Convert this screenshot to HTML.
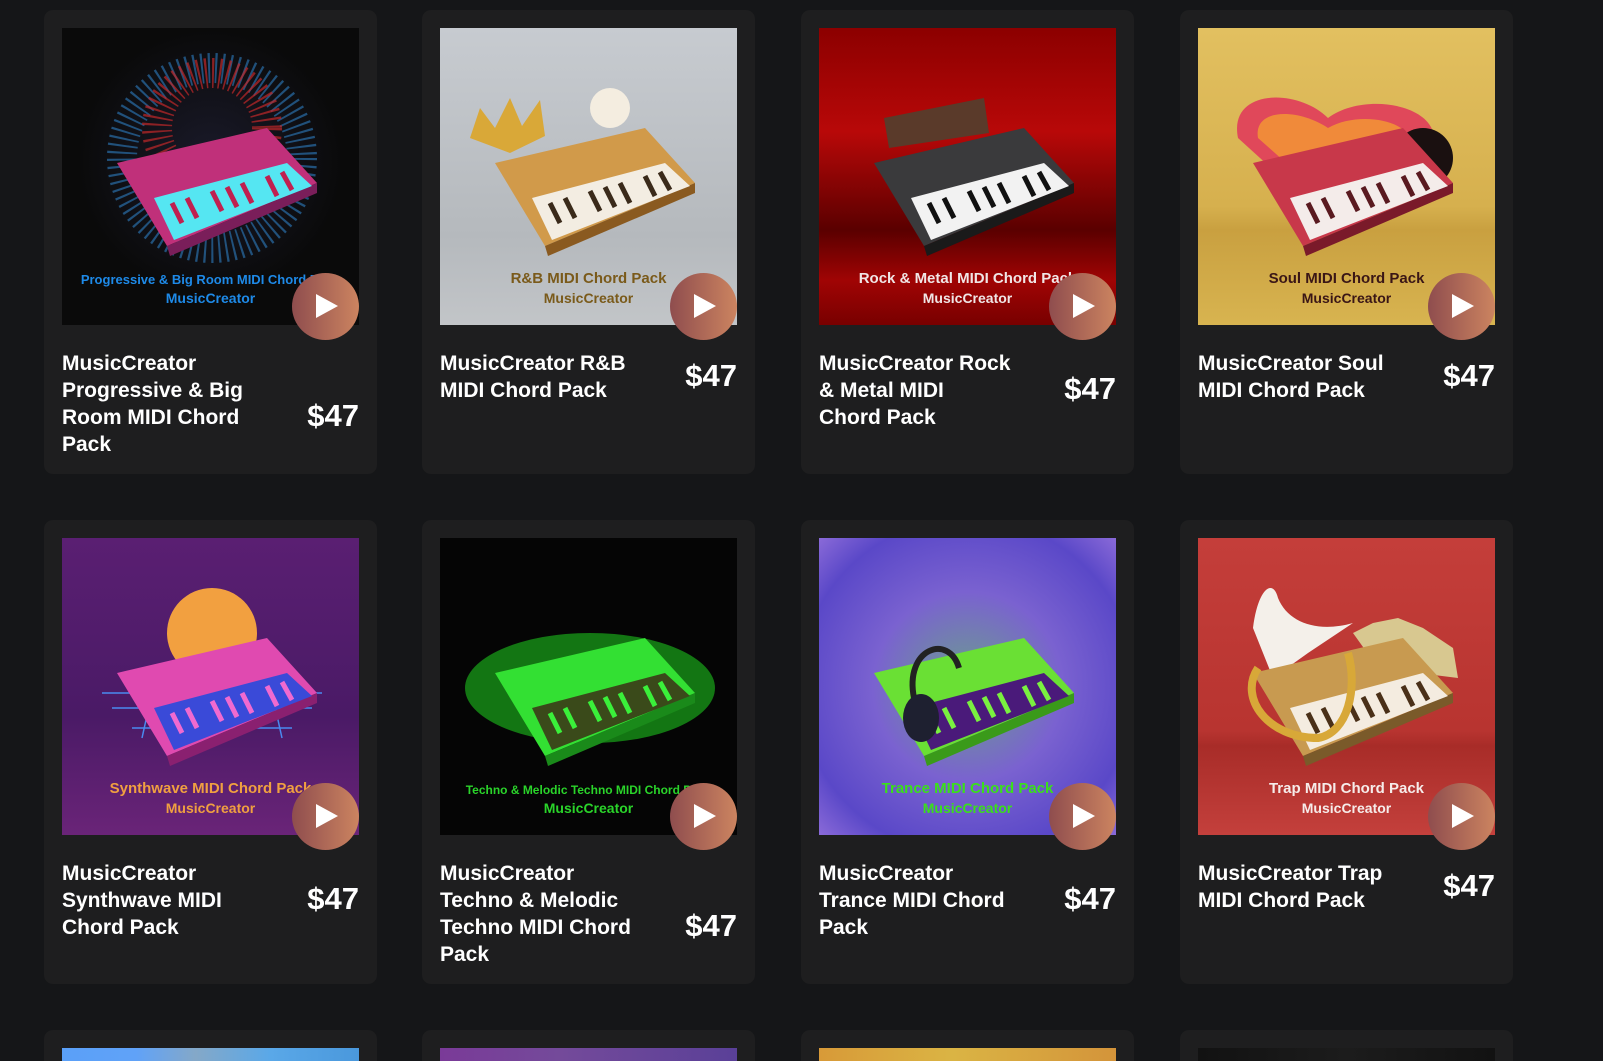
<!DOCTYPE html>
<html><head><meta charset="utf-8">
<style>
*{margin:0;padding:0;box-sizing:border-box}
html,body{width:1603px;height:1061px;overflow:hidden;background:#151618;font-family:"Liberation Sans",sans-serif}
.card{position:absolute;width:333px;height:464px;background:#1e1e1f;border-radius:9px}
.img{position:absolute;left:18px;top:18px;width:297px;height:297px;overflow:hidden}
.img svg{position:absolute;left:0;top:0}
.lab{position:absolute;left:0;right:0;text-align:center;font-weight:bold;white-space:nowrap;overflow:hidden}
.l1{top:242px;font-size:15px}
.l2{top:262px;font-size:14px}
.play{position:absolute;left:248px;top:263px;width:67px;height:67px;border-radius:50%;background:linear-gradient(90deg,#8f4d4e,#cc8460)}
.play:after{content:"";position:absolute;left:24px;top:21px;border-left:22px solid #fff;border-top:12.5px solid transparent;border-bottom:12.5px solid transparent}
.title{position:absolute;left:18px;top:340px;white-space:nowrap;color:#fff;font-weight:bold;font-size:21px;line-height:27px}
.price{position:absolute;right:18px;color:#fff;font-weight:bold;font-size:31px}
</style></head><body>

<!-- Row 1 -->
<div class="card" style="left:44px;top:10px">
 <div class="img" style="background:radial-gradient(circle at 50% 45%,#1a1a2a 0,#0a0a0a 60%)">
  <svg width="297" height="297"><circle cx="150" cy="130" r="90" fill="none" stroke="#2a6da8" stroke-width="30" stroke-dasharray="2 5" opacity=".7"/><circle cx="150" cy="100" r="55" fill="none" stroke="#c0282a" stroke-width="30" stroke-dasharray="2 5" opacity=".7"/>
  <polygon points="55,135 205,100 255,155 105,218" fill="#c0307a"/><polygon points="105,218 255,155 255,165 108,228" fill="#7a1e5a"/><polygon points="92,170 225,135 250,158 112,212" fill="#55e6f2"/>
  <g stroke="#c02050" stroke-width="5"><line x1="110" y1="175" x2="120" y2="195"/><line x1="125" y1="170" x2="135" y2="190"/><line x1="150" y1="163" x2="160" y2="183"/><line x1="165" y1="159" x2="175" y2="179"/><line x1="180" y1="155" x2="190" y2="175"/><line x1="205" y1="148" x2="215" y2="168"/><line x1="220" y1="144" x2="230" y2="162"/></g></svg>
  <div class="lab l1" style="color:#1e8ae8;font-size:13px;top:244px">Progressive &amp; Big Room MIDI Chord Pack</div>
  <div class="lab l2" style="color:#1e8ae8">MusicCreator</div>
 </div>
 <div class="play"></div>
 <div class="title">MusicCreator<br>Progressive &amp; Big<br>Room MIDI Chord<br>Pack</div>
 <div class="price" style="top:388px">$47</div>
</div>

<div class="card" style="left:422px;top:10px">
 <div class="img" style="background:linear-gradient(180deg,#c7cbd0,#b5b9bd 70%,#c2c5c8)">
  <svg width="297" height="297"><polygon points="55,135 205,100 255,155 105,218" fill="#d19a4a"/><polygon points="105,218 255,155 255,165 108,228" fill="#8a5a20"/><polygon points="92,170 225,135 250,158 112,212" fill="#f3ede2"/>
  <g stroke="#3a2a1a" stroke-width="5"><line x1="110" y1="175" x2="120" y2="195"/><line x1="125" y1="170" x2="135" y2="190"/><line x1="150" y1="163" x2="160" y2="183"/><line x1="165" y1="159" x2="175" y2="179"/><line x1="180" y1="155" x2="190" y2="175"/><line x1="205" y1="148" x2="215" y2="168"/><line x1="220" y1="144" x2="230" y2="162"/></g>
  <polygon points="30,110 40,80 55,100 70,70 82,98 100,72 105,108 70,125" fill="#d9a838"/><circle cx="170" cy="80" r="20" fill="#f4ede0"/></svg>
  <div class="lab l1" style="color:#7a5a1a">R&amp;B MIDI Chord Pack</div>
  <div class="lab l2" style="color:#7a5a1a">MusicCreator</div>
 </div>
 <div class="play"></div>
 <div class="title">MusicCreator R&amp;B<br>MIDI Chord Pack</div>
 <div class="price" style="top:348px">$47</div>
</div>

<div class="card" style="left:801px;top:10px">
 <div class="img" style="background:linear-gradient(180deg,#8c0000,#b80808 35%,#5a0000 68%,#a00404 85%,#780000)">
  <svg width="297" height="297"><polygon points="65,90 165,70 170,105 70,120" fill="#5a3a2a"/><polygon points="55,135 205,100 255,155 105,218" fill="#3a3a3c"/><polygon points="105,218 255,155 255,165 108,228" fill="#1a1a1a"/><polygon points="92,170 225,135 250,158 112,212" fill="#f2f2f2"/>
  <g stroke="#111" stroke-width="5"><line x1="110" y1="175" x2="120" y2="195"/><line x1="125" y1="170" x2="135" y2="190"/><line x1="150" y1="163" x2="160" y2="183"/><line x1="165" y1="159" x2="175" y2="179"/><line x1="180" y1="155" x2="190" y2="175"/><line x1="205" y1="148" x2="215" y2="168"/><line x1="220" y1="144" x2="230" y2="162"/></g></svg>
  <div class="lab l1" style="color:#f0e6e6">Rock &amp; Metal MIDI Chord Pack</div>
  <div class="lab l2" style="color:#f0e6e6">MusicCreator</div>
 </div>
 <div class="play"></div>
 <div class="title">MusicCreator Rock<br>&amp; Metal MIDI<br>Chord Pack</div>
 <div class="price" style="top:361px">$47</div>
</div>

<div class="card" style="left:1180px;top:10px">
 <div class="img" style="background:linear-gradient(180deg,#e2c060,#d6b04e 60%,#c9a040 68%,#d8b450)">
  <svg width="297" height="297"><path d="M40,110 C30,60 100,60 130,90 C170,60 260,80 230,130 L150,210 Z" fill="#e0485a"/><path d="M60,110 C55,80 100,80 130,100 C165,80 230,95 210,130 L150,190 Z" fill="#f08a3a"/><circle cx="225" cy="130" r="30" fill="#1a1010"/>
  <polygon points="55,135 205,100 255,155 105,218" fill="#c8384a"/><polygon points="105,218 255,155 255,165 108,228" fill="#7a1a2a"/><polygon points="92,170 225,135 250,158 112,212" fill="#f4ecea"/>
  <g stroke="#5a1a20" stroke-width="5"><line x1="110" y1="175" x2="120" y2="195"/><line x1="125" y1="170" x2="135" y2="190"/><line x1="150" y1="163" x2="160" y2="183"/><line x1="165" y1="159" x2="175" y2="179"/><line x1="180" y1="155" x2="190" y2="175"/><line x1="205" y1="148" x2="215" y2="168"/><line x1="220" y1="144" x2="230" y2="162"/></g></svg>
  <div class="lab l1" style="color:#3a1616">Soul MIDI Chord Pack</div>
  <div class="lab l2" style="color:#3a1616">MusicCreator</div>
 </div>
 <div class="play"></div>
 <div class="title">MusicCreator Soul<br>MIDI Chord Pack</div>
 <div class="price" style="top:348px">$47</div>
</div>

<!-- Row 2 -->
<div class="card" style="left:44px;top:520px">
 <div class="img" style="background:linear-gradient(180deg,#5a1f72,#4a1a66 60%,#6a2478)">
  <svg width="297" height="297"><circle cx="150" cy="95" r="45" fill="#f2a040"/><g stroke="#4a8af0" stroke-width="1.5"><line x1="40" y1="155" x2="260" y2="155"/><line x1="50" y1="170" x2="250" y2="170"/><line x1="70" y1="190" x2="230" y2="190"/><line x1="90" y1="155" x2="80" y2="200"/><line x1="210" y1="155" x2="220" y2="200"/></g>
  <polygon points="55,135 205,100 255,155 105,218" fill="#e04ab0"/><polygon points="105,218 255,155 255,165 108,228" fill="#8a2070"/><polygon points="92,170 225,135 250,158 112,212" fill="#3a4ad8"/>
  <g stroke="#f06ad0" stroke-width="5"><line x1="110" y1="175" x2="120" y2="195"/><line x1="125" y1="170" x2="135" y2="190"/><line x1="150" y1="163" x2="160" y2="183"/><line x1="165" y1="159" x2="175" y2="179"/><line x1="180" y1="155" x2="190" y2="175"/><line x1="205" y1="148" x2="215" y2="168"/><line x1="220" y1="144" x2="230" y2="162"/></g></svg>
  <div class="lab l1" style="color:#f0a040">Synthwave MIDI Chord Pack</div>
  <div class="lab l2" style="color:#f0a040">MusicCreator</div>
 </div>
 <div class="play"></div>
 <div class="title">MusicCreator<br>Synthwave MIDI<br>Chord Pack</div>
 <div class="price" style="top:361px">$47</div>
</div>

<div class="card" style="left:422px;top:520px">
 <div class="img" style="background:#050505">
  <svg width="297" height="297"><ellipse cx="150" cy="150" rx="125" ry="55" fill="#1fd41f" opacity=".55"/>
  <polygon points="55,135 205,100 255,155 105,218" fill="#33e033"/><polygon points="105,218 255,155 255,165 108,228" fill="#1a8a1a"/><polygon points="92,170 225,135 250,158 112,212" fill="#3a4a1a"/>
  <g stroke="#3af03a" stroke-width="5"><line x1="110" y1="175" x2="120" y2="195"/><line x1="125" y1="170" x2="135" y2="190"/><line x1="150" y1="163" x2="160" y2="183"/><line x1="165" y1="159" x2="175" y2="179"/><line x1="180" y1="155" x2="190" y2="175"/><line x1="205" y1="148" x2="215" y2="168"/><line x1="220" y1="144" x2="230" y2="162"/></g></svg>
  <div class="lab l1" style="color:#2ad42a;font-size:12px;top:245px">Techno &amp; Melodic Techno MIDI Chord Pack</div>
  <div class="lab l2" style="color:#2ad42a">MusicCreator</div>
 </div>
 <div class="play"></div>
 <div class="title">MusicCreator<br>Techno &amp; Melodic<br>Techno MIDI Chord<br>Pack</div>
 <div class="price" style="top:388px">$47</div>
</div>

<div class="card" style="left:801px;top:520px">
 <div class="img" style="background:radial-gradient(ellipse at 50% 50%,#6aa08a 0,#7a62d0 45%,#5a48c8 80%,#8a6ad8)">
  <svg width="297" height="297"><polygon points="55,135 205,100 255,155 105,218" fill="#6ae034"/><polygon points="105,218 255,155 255,165 108,228" fill="#3a9a1a"/><polygon points="92,170 225,135 250,158 112,212" fill="#4a1a7a"/>
  <g stroke="#7af040" stroke-width="5"><line x1="110" y1="175" x2="120" y2="195"/><line x1="125" y1="170" x2="135" y2="190"/><line x1="150" y1="163" x2="160" y2="183"/><line x1="165" y1="159" x2="175" y2="179"/><line x1="180" y1="155" x2="190" y2="175"/><line x1="205" y1="148" x2="215" y2="168"/><line x1="220" y1="144" x2="230" y2="162"/></g>
  <path d="M95,160 C85,110 130,95 140,130" stroke="#222" stroke-width="6" fill="none"/><ellipse cx="102" cy="180" rx="18" ry="24" fill="#1e2030"/></svg>
  <div class="lab l1" style="color:#3ae01a">Trance MIDI Chord Pack</div>
  <div class="lab l2" style="color:#3ae01a">MusicCreator</div>
 </div>
 <div class="play"></div>
 <div class="title">MusicCreator<br>Trance MIDI Chord<br>Pack</div>
 <div class="price" style="top:361px">$47</div>
</div>

<div class="card" style="left:1180px;top:520px">
 <div class="img" style="background:linear-gradient(180deg,#c43e3a,#b83430 65%,#a82c28 70%,#c4403c)">
  <svg width="297" height="297"><path d="M155,95 L175,85 L200,80 L225,90 L255,110 L260,140 L180,130 Z" fill="#d8c890"/><path d="M55,90 C60,50 75,40 80,60 C90,85 120,95 155,85 L110,115 L75,140 Z" fill="#f4f0ea"/>
  <polygon points="55,135 205,100 255,155 105,218" fill="#c89a50"/><polygon points="105,218 255,155 255,165 108,228" fill="#7a5a2a"/><polygon points="92,170 225,135 250,158 112,212" fill="#f4ece0"/>
  <g stroke="#4a3018" stroke-width="5"><line x1="110" y1="175" x2="120" y2="195"/><line x1="125" y1="170" x2="135" y2="190"/><line x1="150" y1="163" x2="160" y2="183"/><line x1="165" y1="159" x2="175" y2="179"/><line x1="180" y1="155" x2="190" y2="175"/><line x1="205" y1="148" x2="215" y2="168"/><line x1="220" y1="144" x2="230" y2="162"/></g>
  <path d="M60,130 C40,160 70,200 120,200 C150,195 160,150 150,115" stroke="#d8a838" stroke-width="8" fill="none"/></svg>
  <div class="lab l1" style="color:#f6ecea">Trap MIDI Chord Pack</div>
  <div class="lab l2" style="color:#f6ecea">MusicCreator</div>
 </div>
 <div class="play"></div>
 <div class="title">MusicCreator Trap<br>MIDI Chord Pack</div>
 <div class="price" style="top:348px">$47</div>
</div>

<!-- Row 3 -->
<div class="card" style="left:44px;top:1030px;height:31px;border-radius:9px 9px 0 0;overflow:hidden"><div class="img" style="background:linear-gradient(90deg,#5aa0f8,#60a2f8 25%,#84a8c8 45%,#5aa8e8 70%,#4a98dc);height:13px"></div></div>
<div class="card" style="left:422px;top:1030px;height:31px;border-radius:9px 9px 0 0;overflow:hidden"><div class="img" style="background:linear-gradient(90deg,#7a3a98,#744a9a 40%,#5a4098);height:13px"></div></div>
<div class="card" style="left:801px;top:1030px;height:31px;border-radius:9px 9px 0 0;overflow:hidden"><div class="img" style="background:linear-gradient(90deg,#d89a38,#dab444 45%,#d4943a);height:13px"></div></div>
<div class="card" style="left:1180px;top:1030px;height:31px;border-radius:9px 9px 0 0;overflow:hidden"><div class="img" style="background:linear-gradient(90deg,#121212,#1c1c1c 50%,#121212);height:13px"></div></div>

</body></html>
